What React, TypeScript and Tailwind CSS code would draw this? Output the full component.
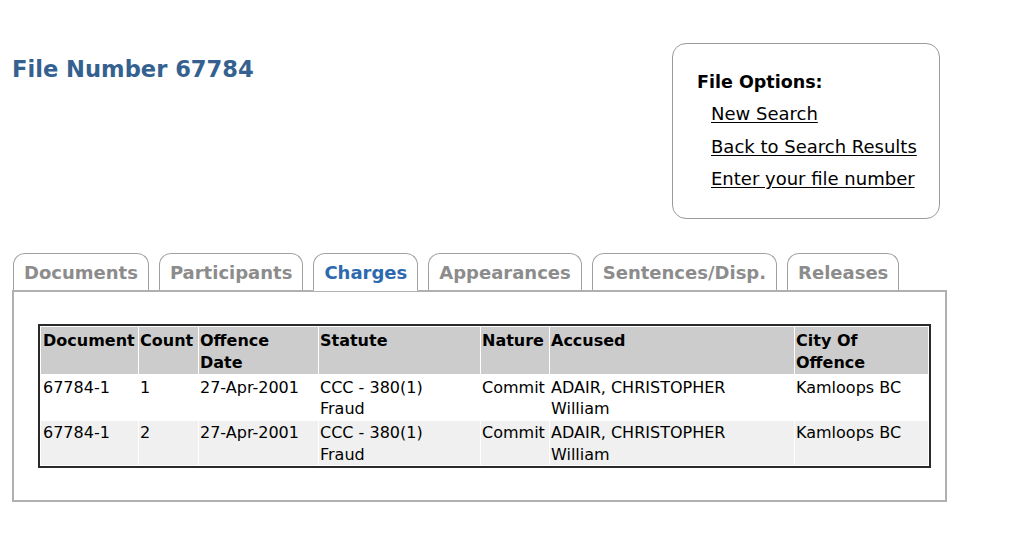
import React from "react";

const tabs = ["Documents", "Participants", "Charges", "Appearances", "Sentences/Disp.", "Releases"];

const rows = [
  { doc: "67784-1", count: "1", date: "27-Apr-2001", statute: ["CCC - 380(1)", "Fraud"], nature: "Commit", accused: ["ADAIR, CHRISTOPHER", "William"], city: "Kamloops BC" },
  { doc: "67784-1", count: "2", date: "27-Apr-2001", statute: ["CCC - 380(1)", "Fraud"], nature: "Commit", accused: ["ADAIR, CHRISTOPHER", "William"], city: "Kamloops BC" },
];

export default function App() {
  return (
    <div className="w-[1019px] h-[554px] bg-white text-black" style={{ fontFamily: '"DejaVu Sans", Verdana, sans-serif' }}>
      {/* top: title + options */}
      <div className="flex pt-[43px] pl-[12px]">
        <h1 className="mt-[12px] text-[22.6px] leading-[28px] font-bold text-[#34618f] w-[660px]">File Number 67784</h1>
        <div className="w-[268px] h-[176px] border-[1.5px] border-[#9a9a9a] rounded-[14px] pl-[24px] pt-[27px]">
          <div className="text-[17.5px] font-bold leading-[22px]">File Options:</div>
          <div className="flex flex-col pl-[14px] mt-[10px] gap-[10px] text-[18px] leading-[22.5px]">
            <a className="underline underline-offset-2">New Search</a>
            <a className="underline underline-offset-2">Back to Search Results</a>
            <a className="underline underline-offset-2">Enter your file number</a>
          </div>
        </div>
      </div>

      {/* tabs */}
      <div className="mt-[34px] pl-[13px] flex gap-[10px] relative z-10">
        {tabs.map((t) => {
          const active = t === "Charges";
          return (
            <div
              key={t}
              className={
                "px-[10px] pt-[8px] border border-[#a0a0a0] rounded-t-[12px] text-[18px] font-bold leading-[22px] " +
                (active ? "h-[38px] border-b-white bg-white text-[#2d69ae]" : "border-b-0 h-[37px] text-[#8c8c8c] bg-white")
              }
            >
              {t}
            </div>
          );
        })}
      </div>

      {/* panel */}
      <div className="ml-[12px] -mt-px w-[935px] h-[212px] border-2 border-[#b0b0b0] pt-[32px] pl-[24px]">
        <table className="w-[893px] border-2 border-[#2a2a2a] border-separate border-spacing-[1px] text-[16px] leading-[21.5px]">
          <thead>
            <tr className="bg-[#cccccc] font-bold text-left align-top leading-[22px]">
              <th className="w-[97px] pl-[2px] pt-[3px] pb-[5px] font-bold">Document</th>
              <th className="w-[59px] pl-[1px] pt-[3px] font-bold">Count</th>
              <th className="w-[119px] pl-[1px] pt-[3px] font-bold">Offence<br />Date</th>
              <th className="w-[161px] pl-[1px] pt-[3px] font-bold">Statute</th>
              <th className="w-[68px] pl-[1px] pt-[3px] font-bold">Nature</th>
              <th className="w-[244px] pl-[1px] pt-[3px] font-bold">Accused</th>
              <th className="pl-[1px] pt-[3px] font-bold">City Of<br />Offence</th>
            </tr>
          </thead>
          <tbody>
            {rows.map((r, i) => (
              <tr key={i} className={"align-top " + (i % 2 === 1 ? "bg-[#f0f0f0]" : "bg-white")}>
                <td className="pl-[2px] pt-[1.5px]">{r.doc}</td>
                <td className="pl-[1px] pt-[1.5px]">{r.count}</td>
                <td className="pl-[1px] pt-[1.5px]">{r.date}</td>
                <td className="pl-[1px] pt-[1.5px]">{r.statute[0]}<br />{r.statute[1]}</td>
                <td className="pl-[1px] pt-[1.5px]">{r.nature}</td>
                <td className="pl-[1px] pt-[1.5px]">{r.accused[0]}<br />{r.accused[1]}</td>
                <td className="pl-[1px] pt-[1.5px]">{r.city}</td>
              </tr>
            ))}
          </tbody>
        </table>
      </div>
    </div>
  );
}
